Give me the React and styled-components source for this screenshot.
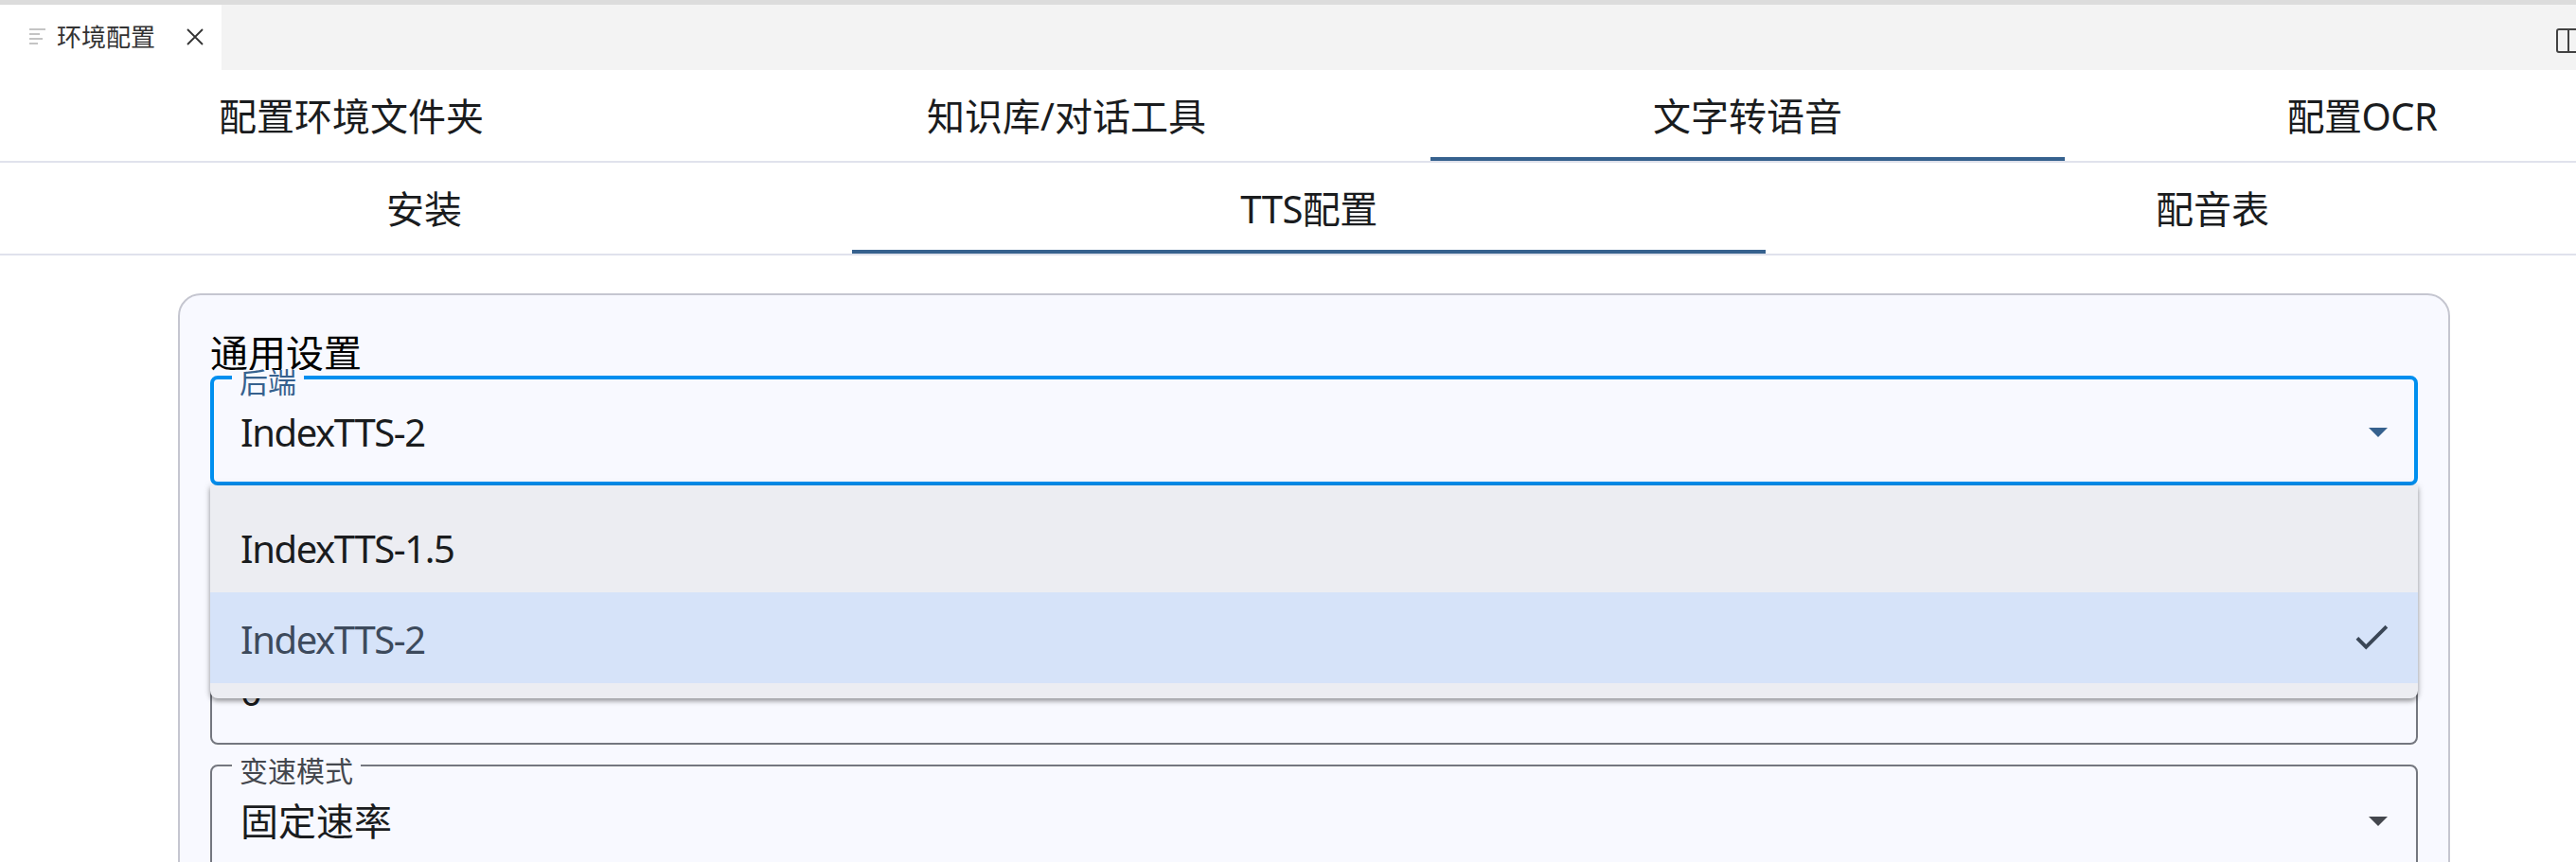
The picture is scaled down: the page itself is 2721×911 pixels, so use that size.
import React from "react";
import styled, { createGlobalStyle } from "styled-components";

const Global = createGlobalStyle`
  html, body { margin: 0; padding: 0; height: 911px; overflow: hidden; background: #fff; }
  body { font-family: "Noto Sans", "Noto Sans CJK SC", sans-serif; color: #1a1c1e; }
  * { box-sizing: border-box; }
`;

const Page = styled.div`
  width: 2809px;
  height: 911px;
  overflow: hidden;
`;

const TopStrip = styled.div`
  height: 5px;
  background: #dcdcdc;
`;

const EditorBar = styled.div`
  height: 69px;
  width: 2721px;
  background: #f3f3f3;
  display: flex;
  align-items: stretch;
  justify-content: space-between;
`;

const EditorTab = styled.div`
  width: 234px;
  background: #fff;
  display: flex;
  align-items: center;
  padding-left: 31px;
  color: #333;
  font-size: 26px;
  padding-bottom: 1px;
`;

const TabLabel = styled.span`
  margin-left: 12px;
  line-height: 1;
`;

const CloseIcon = styled.svg`
  margin-left: 33px;
  width: 18px;
  height: 18px;
  flex: none;
`;

const LayoutIcon = styled.svg`
  width: 21px;
  height: 26px;
  margin-top: 25px;
  flex: none;
`;

const TabRow = styled.div`
  display: grid;
  grid-template-columns: ${(p) => p.$cols};
  height: 98px;
  border-bottom: 2px solid #e0e2ec;
`;

const TabItem = styled.div`
  display: flex;
  align-items: center;
  justify-content: center;
  font-size: 40px;
  line-height: 1;
  color: #1a1c1e;
  letter-spacing: ${(p) => (p.$latin ? "-0.5px" : "0")};
  padding-top: 5px;
  padding-right: ${(p) => p.$nudge || 0}px;
  border-bottom: 4px solid ${(p) => (p.$active ? "#36618e" : "transparent")};
`;

const Panel = styled.section`
  position: relative;
  margin: 40px 0 0 188px;
  width: 2400px;
  height: 900px;
  background: #f8f9ff;
  border: 2px solid #c5c6d0;
  border-radius: 24px;
  padding: 34px 32px 0 32px;
`;

const PanelTitle = styled.h2`
  margin: 0;
  height: 51px;
  font-size: 40px;
  font-weight: 400;
  line-height: 54px;
  color: #000;
`;

const FieldStack = styled.div`
  display: flex;
  flex-direction: column;
  gap: 21px;
`;

const Field = styled.div`
  position: relative;
  height: 116px;
  border: ${(p) => (p.$focused ? "4px solid #008fef" : "2px solid #74777f")};
  border-radius: 8px;
  padding-left: ${(p) => (p.$focused ? "28px" : "30px")};
  padding-top: 4px;
  display: flex;
  align-items: center;
  font-size: 40px;
  line-height: 1;
  color: #1a1c1e;
`;

const FieldLabel = styled.span`
  position: absolute;
  left: ${(p) => (p.$focused ? "19px" : "21px")};
  top: ${(p) => (p.$focused ? "-10px" : "-8px")};
  padding: 0 8px;
  background: #f8f9ff;
  font-size: 30px;
  line-height: 26px;
  height: 26px;
  color: ${(p) => (p.$focused ? "#36618e" : "#44474e")};
`;

const FieldValue = styled.span`
  flex: 1;
  letter-spacing: ${(p) => (p.$latin ? "-1.4px" : "0")};
`;

const Caret = styled.svg`
  position: absolute;
  right: ${(p) => (p.$focused ? "28px" : "30px")};
  top: 50%;
  margin-top: -3px;
  width: 20px;
  height: 10px;
`;

const Menu = styled.div`
  position: absolute;
  left: 32px;
  right: 32px;
  top: 201px;
  height: 225px;
  padding: 17px 0 16px;
  background: #ecedf2;
  border-radius: 0 0 8px 8px;
  box-shadow: 0 3px 5px rgba(0, 0, 0, 0.35), 0 0 8px rgba(0, 0, 0, 0.12);
`;

const MenuItem = styled.div`
  height: 96px;
  display: flex;
  align-items: center;
  justify-content: space-between;
  padding: 0 26px 0 32px;
  font-size: 40px;
  letter-spacing: -1.4px;
  line-height: 1;
  color: ${(p) => (p.$selected ? "#3d4a5c" : "#1a1c1e")};
  background: ${(p) => (p.$selected ? "#d6e3f9" : "transparent")};
`;

const MenuText = styled.span`
  padding-top: 3px;
`;

const CheckIcon = styled.svg`
  width: 46px;
  height: 46px;
  margin-top: -2px;
  fill: #3a4656;
`;

const ListIcon = () => (
  <svg width="17" height="22" viewBox="0 0 17 22" fill="none" stroke="#c4c4c4" strokeWidth="2" style={{ flex: "none" }}>
    <path d="M0 3h17M0 8h11M0 13h14M0 18h9" />
  </svg>
);

export default function App() {
  return (
    <Page>
      <Global />
      <TopStrip />
      <EditorBar>
        <EditorTab>
          <ListIcon />
          <TabLabel>环境配置</TabLabel>
          <CloseIcon viewBox="0 0 18 18" fill="none" stroke="#333" strokeWidth="1.8">
            <path d="M1 1l16 16M17 1L1 17" />
          </CloseIcon>
        </EditorTab>
        <LayoutIcon viewBox="0 0 21 26" fill="none" stroke="#424242" strokeWidth="2">
          <path d="M21 1H3a2 2 0 0 0-2 2v20a2 2 0 0 0 2 2h18M13 1v24" />
        </LayoutIcon>
      </EditorBar>
      <TabRow $cols="742px 769px 670px 628px">
        <TabItem>配置环境文件夹</TabItem>
        <TabItem>知识库/对话工具</TabItem>
        <TabItem $active>文字转语音</TabItem>
        <TabItem $latin>配置OCR</TabItem>
      </TabRow>
      <TabRow $cols="900px 965px 944px">
        <TabItem $nudge={4}>安装</TabItem>
        <TabItem $active $latin>TTS配置</TabItem>
        <TabItem>配音表</TabItem>
      </TabRow>
      <Panel>
        <PanelTitle>通用设置</PanelTitle>
        <FieldStack>
          <Field $focused>
            <FieldLabel $focused>后端</FieldLabel>
            <FieldValue $latin>IndexTTS-2</FieldValue>
            <Caret $focused viewBox="0 0 20 10"><path d="M0 0h20L10 10z" fill="#36618e" /></Caret>
          </Field>
          <Field />
          <Field>
            <FieldValue>0</FieldValue>
          </Field>
          <Field>
            <FieldLabel>变速模式</FieldLabel>
            <FieldValue>固定速率</FieldValue>
            <Caret viewBox="0 0 20 10"><path d="M0 0h20L10 10z" fill="#44474e" /></Caret>
          </Field>
        </FieldStack>
        <Menu>
          <MenuItem><MenuText>IndexTTS-1.5</MenuText></MenuItem>
          <MenuItem $selected>
            <MenuText>IndexTTS-2</MenuText>
            <CheckIcon viewBox="0 0 24 24"><path d="M9 16.17L4.83 12l-1.42 1.41L9 19 21 7l-1.41-1.41z" /></CheckIcon>
          </MenuItem>
        </Menu>
      </Panel>
    </Page>
  );
}
